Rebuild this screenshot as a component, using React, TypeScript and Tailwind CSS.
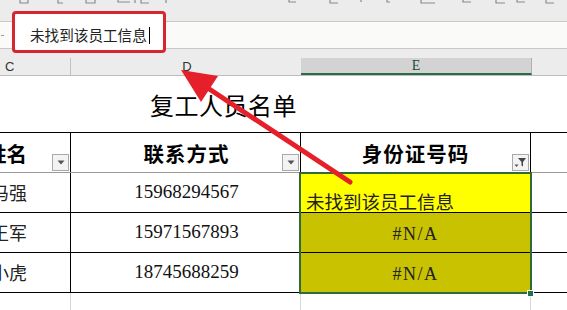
import React from 'react'

const serif = "font-['Liberation_Serif','Noto_Sans_CJK_SC',serif]"

const DropButton = ({ filtered }: { filtered?: boolean }) => (
  <div className="absolute right-[1px] bottom-[1px] w-[17px] h-[17px] border border-[#a9a9a9] bg-[#f3f3f3] flex items-center justify-center">
    {filtered ? (
      <svg width="13" height="11" viewBox="0 0 13 11">
        <path d="M4 1h8L9 5v4.5L7.5 8.5V5z" fill="#444" />
        <path d="M0.5 7.5h4L2.5 10z" fill="#555" />
      </svg>
    ) : (
      <svg width="8" height="5" viewBox="0 0 8 5">
        <path d="M0.5 0.5h7L4 4.5z" fill="#555" />
      </svg>
    )}
  </div>
)

const rows = [
  { name: '冯强', phone: '15968294567', id: '未找到该员工信息', missing: false },
  { name: '王军', phone: '15971567893', id: '#N/A', missing: true },
  { name: '小虎', phone: '18745688259', id: '#N/A', missing: true },
]

export default function App() {
  return (
    <div className={`relative w-[567px] h-[310px] overflow-hidden bg-white text-black ${serif}`}>
      {/* toolbar remnant */}
      <div className="h-[21px] bg-[#ececec]">
        <svg width="567" height="8" viewBox="0 0 567 8" className="block">
          <g fill="none" stroke="#8a8a8a" strokeWidth="1.2">
            <path d="M20 0v3h8V0M58 0v3h5M86 0v3h9V0M118 0v2h12M135 0v3M141 0v3h8M166 0v3" />
            <path d="M289 0v2h7M330 0v3h8M361 0v2M387 0v2h3M421 0v3h14M463 0v2h8M496 0v3h9M517 0v2h8M546 0v3h8" />
          </g>
        </svg>
      </div>

      {/* formula bar */}
      <div className="h-[28px] border-y border-[#c8c8c8] bg-[#fafaf8] flex items-center">
        <div className="w-[8px] flex justify-start pl-[1px]">
          <div className="w-[3px] h-[1px] bg-[#999]" />
        </div>
        <div className="relative z-10 flex items-center pl-[22px] text-[14.6px] leading-none font-['Noto_Sans_CJK_SC',sans-serif] text-[#222]">
          未找到该员工信息
          <span className="ml-[2px] w-[1px] h-[17px] bg-black" />
        </div>
      </div>
      <div className="absolute left-[12px] top-[11px] w-[154px] h-[42px] border-[3px] border-[#d62630] rounded-[4px] bg-white" />

      <div className="h-[9px] bg-[#ececec]" />

      {/* column headers */}
      <div className="h-[18px] flex bg-[#ececec] border-b border-[#bdbdbd] text-[13px] leading-none font-['Liberation_Sans',sans-serif] text-[#333]">
        <div className="w-[71px] border-r border-[#c3c3c3] flex items-center pl-[5px]">C</div>
        <div className="w-[230px] flex items-end justify-center pb-[2px] pl-[2px]">D</div>
        <div className={`w-[231px] bg-[#d3d3d3] border-b-2 border-[#2a6b45] border-r border-r-[#b0b0b0] flex items-center justify-center text-[14px] text-[#1d4d32] ${serif}`}>
          E
        </div>
        <div className="flex-1" />
      </div>

      {/* title */}
      <div className="h-[56px] flex items-center pl-[150px] pt-[2px] text-[24px] tracking-[0.5px] font-['Noto_Sans_CJK_SC',serif]">
        复工人员名单
      </div>

      {/* table header */}
      <div className="h-[41px] flex border-t border-black border-b border-b-[#9a9a9a] text-[20.5px] font-bold font-['Noto_Sans_CJK_SC',sans-serif]">
        <div className="relative w-[71px] border-r border-black overflow-hidden flex items-center pt-[2px]">
          <span className="ml-[-14px] whitespace-nowrap">姓名</span>
          <DropButton />
        </div>
        <div className="relative w-[230px] border-r border-black flex items-center justify-center pt-[2px] pl-[2px] tracking-[1px]">
          联系方式
          <DropButton />
        </div>
        <div className="relative w-[230px] border-r border-black flex items-center justify-center pt-[2px] tracking-[1px]">
          身份证号码
          <DropButton filtered />
        </div>
        <div className="flex-1" />
      </div>

      {/* data rows */}
      <div className="relative">
        {rows.map((r) => (
          <div key={r.phone} className="h-[40px] flex border-b border-black">
            <div className="w-[71px] border-r border-black overflow-hidden flex items-center text-[18px] font-['Noto_Sans_CJK_SC',sans-serif] text-[#222]">
              <span className="ml-[-9px] whitespace-nowrap">{r.name}</span>
            </div>
            <div className="w-[230px] border-r border-black flex items-center justify-center pl-[2px] text-[19px] text-[#111]">
              {r.phone}
            </div>
            {r.missing ? (
              <div className="w-[230px] border-r border-black bg-[#c9c200] flex items-center justify-center pt-[4px] text-[18px] tracking-[1.5px] text-[#222]">
                {r.id}
              </div>
            ) : (
              <div className="w-[230px] border-r border-black bg-[#ffff00] flex items-end pl-[5px] pb-[2px] text-[18.5px] leading-none font-['Noto_Sans_CJK_SC',sans-serif] text-[#222]">
                {r.id}
              </div>
            )}
            <div className="flex-1" />
          </div>
        ))}
        <div className="absolute left-[299px] top-[-1px] w-[233px] h-[122px] border-2 border-[#2f6a3c] pointer-events-none" />
        <div className="absolute left-[527px] top-[117px] w-[7px] h-[7px] bg-[#217346] border border-white" />
      </div>

      {/* empty gridlines */}
      <div className="flex h-[18px]">
        <div className="w-[71px] border-r border-[#d6d6d6]" />
        <div className="w-[230px] border-r border-[#d6d6d6]" />
        <div className="w-[230px] border-r border-[#d6d6d6]" />
      </div>

      {/* annotation arrow */}
      <svg className="absolute inset-0 z-20 pointer-events-none" width="567" height="310" viewBox="0 0 567 310">
        <line x1="207" y1="87.5" x2="350" y2="182" stroke="#e5202a" strokeWidth="5" strokeLinecap="round" />
        <polygon points="181,70 218,76 201,102" fill="#e5202a" />
      </svg>
    </div>
  )
}
